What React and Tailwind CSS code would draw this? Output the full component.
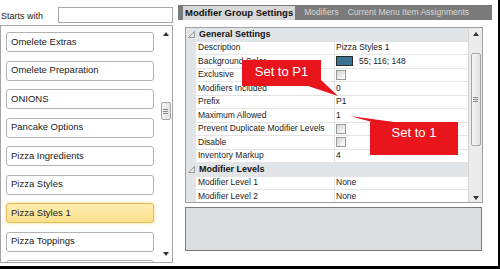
import React from "react";

const items = [
  "Omelete Extras",
  "Omelete Preparation",
  "ONIONS",
  "Pancake Options",
  "Pizza Ingredients",
  "Pizza Styles",
  "Pizza Styles 1",
  "Pizza Toppings",
  "",
];

function UpArrow() {
  return (
    <svg width="6" height="4" viewBox="0 0 6 4">
      <polygon points="0,4 3,0 6,4" fill="#333" />
    </svg>
  );
}
function DownArrow() {
  return (
    <svg width="6" height="4" viewBox="0 0 6 4">
      <polygon points="0,0 6,0 3,4" fill="#333" />
    </svg>
  );
}
function Grip() {
  return (
    <div className="flex flex-col gap-[1px] w-[5px]">
      <div className="h-px bg-[#888]" />
      <div className="h-px bg-[#888]" />
      <div className="h-px bg-[#888]" />
    </div>
  );
}
function Glyph() {
  return (
    <svg width="7" height="7" viewBox="0 0 7 7">
      <polygon points="0.5,6.5 6.5,6.5 6.5,0.5" fill="none" stroke="#999" strokeWidth="1" />
    </svg>
  );
}
function Check() {
  return <div className="w-[10px] h-[10px] border border-[#9a9a9a] bg-linear-to-br from-[#d4d4d4] to-white" />;
}

function Row({ name, children }) {
  return (
    <div className="flex h-[13.5px] shrink-0">
      <div className="w-[10px] bg-[#e2e5e8] shrink-0" />
      <div className="w-[138px] shrink-0 border-b border-[#e4e4e4] pl-[2px] flex items-center text-[8.5px] text-[#222] whitespace-nowrap overflow-hidden">
        {name}
      </div>
      <div className="flex-1 border-b border-l border-[#e4e4e4] pl-[1px] flex items-center text-[8.5px] text-[#222] whitespace-nowrap">
        {children}
      </div>
    </div>
  );
}
function Header({ title }) {
  return (
    <div className="flex h-[13.5px] shrink-0 bg-[#e2e5e8] items-center">
      <div className="w-[12px] pl-[2px] flex items-center">
        <Glyph />
      </div>
      <div className="text-[9px] font-bold text-[#111] pl-[1px]">{title}</div>
    </div>
  );
}

export default function App() {
  return (
    <div className="relative w-[500px] h-[269px] bg-white border-r-2 border-b-[3px] border-black overflow-hidden font-['Liberation_Sans',Arial,sans-serif]">
      <div className="flex h-full">
        {/* Left column */}
        <div className="w-[173px] shrink-0 flex flex-col">
          <div className="h-[25px] flex items-start pt-[7px]">
            <div className="text-[9px] text-[#222] pl-[1px] pt-[3px]">Starts with</div>
            <div className="ml-auto w-[115px] h-[16px] border border-[#a8a8a8] bg-white" />
          </div>
          <div className="h-[238px] border border-[#a5a5a5] flex overflow-hidden">
            <div className="w-[153px] shrink-0 pl-[5px] pt-[6px] flex flex-col gap-[8.5px]">
              {items.map((t, i) => {
                const sel = t === "Pizza Styles 1";
                return (
                  <div
                    key={i}
                    className={
                      "h-[20px] w-[148px] shrink-0 rounded-[3px] border flex items-center pl-[4px] text-[9.5px] text-[#222] " +
                      (sel
                        ? "border-[#e2bf5e] bg-linear-to-b from-[#feedb0] to-[#fcdf8b] shadow-[0_0_2px_1px_#fbe9b0]"
                        : "border-[#b3b3b3] bg-white")
                    }
                  >
                    {t}
                  </div>
                );
              })}
            </div>
            <div className="flex-1 flex flex-col items-center pl-[5px] pt-[6px]">
              <UpArrow />
              <div className="mt-[66px] w-[10px] h-[18px] border border-[#a6a6a6] rounded-[2px] bg-linear-to-r from-[#f4f4f4] to-[#e2e2e2] flex items-center justify-center">
                <Grip />
              </div>
              <div className="mt-auto mb-[6px]">
                <DownArrow />
              </div>
            </div>
          </div>
        </div>

        {/* Right column */}
        <div className="flex-1 pl-[5px] flex flex-col">
          <div className="mt-[5px] h-[15px] w-[314px] bg-[#7b7b7b] flex items-stretch">
            <div className="ml-[5px] mt-[1px] px-[2px] bg-[#d8d8d8] flex items-center text-[9.5px] font-bold text-[#111] whitespace-nowrap">
              Modifier Group Settings
            </div>
            <div className="ml-[9px] flex items-center text-[8.5px] text-[#d8d8d8]">Modifiers</div>
            <div className="ml-[9px] flex items-center text-[8.5px] text-[#d8d8d8] whitespace-nowrap">
              Current Menu Item Assignments
            </div>
          </div>

          <div className="ml-[7px] mt-[7px] w-[298px] h-[176px] border border-[#a0a0a0] flex overflow-hidden">
            <div className="w-[282px] shrink-0 flex flex-col">
              <Header title="General Settings" />
              <Row name="Description">Pizza Styles 1</Row>
              <Row name="Background Color">
                <div className="w-[17px] h-[10px] bg-[#377494] border border-[#2a2a2a]" />
                <span className="ml-[6px]">55; 116; 148</span>
              </Row>
              <Row name="Exclusive"><Check /></Row>
              <Row name="Modifiers Included">0</Row>
              <Row name="Prefix">P1</Row>
              <Row name="Maximum Allowed">1</Row>
              <Row name="Prevent Duplicate Modifier Levels"><Check /></Row>
              <Row name="Disable"><Check /></Row>
              <Row name="Inventory Markup">4</Row>
              <Header title="Modifier Levels" />
              <Row name="Modifier Level 1">None</Row>
              <Row name="Modifier Level 2">None</Row>
            </div>
            <div className="flex-1 bg-[#ececec] border-l border-[#d6d6d6] flex flex-col items-center pt-[4px]">
              <UpArrow />
              <div className="mt-[17px] w-[10px] h-[93px] border border-[#a6a6a6] rounded-[2px] bg-linear-to-r from-[#f6f6f6] to-[#e0e0e0] flex items-center justify-center">
                <Grip />
              </div>
              <div className="mt-auto mb-[2px]">
                <DownArrow />
              </div>
            </div>
          </div>

          <div className="ml-[7px] mt-[4px] w-[297px] h-[44px] border border-[#7a7a7a] bg-[#dcdfe2]" />
        </div>
      </div>

      {/* Callouts */}
      <svg className="absolute left-0 top-0 pointer-events-none" width="500" height="269">
        <polygon points="308,86 321,80 338,96" fill="#e8151c" />
        <polygon points="350,116 372,122 394,122" fill="#e8151c" />
      </svg>
      <div className="absolute left-[242px] top-[60px] w-[79px] h-[26px] bg-[#e8151c] flex items-start justify-center pt-[4px] text-white text-[13px] leading-[15px]">
        Set to P1
      </div>
      <div className="absolute left-[370px] top-[122px] w-[88px] h-[33px] bg-[#e8151c] flex items-start justify-center pt-[3px] text-white text-[13px] leading-[15px]">
        Set to 1
      </div>
    </div>
  );
}
